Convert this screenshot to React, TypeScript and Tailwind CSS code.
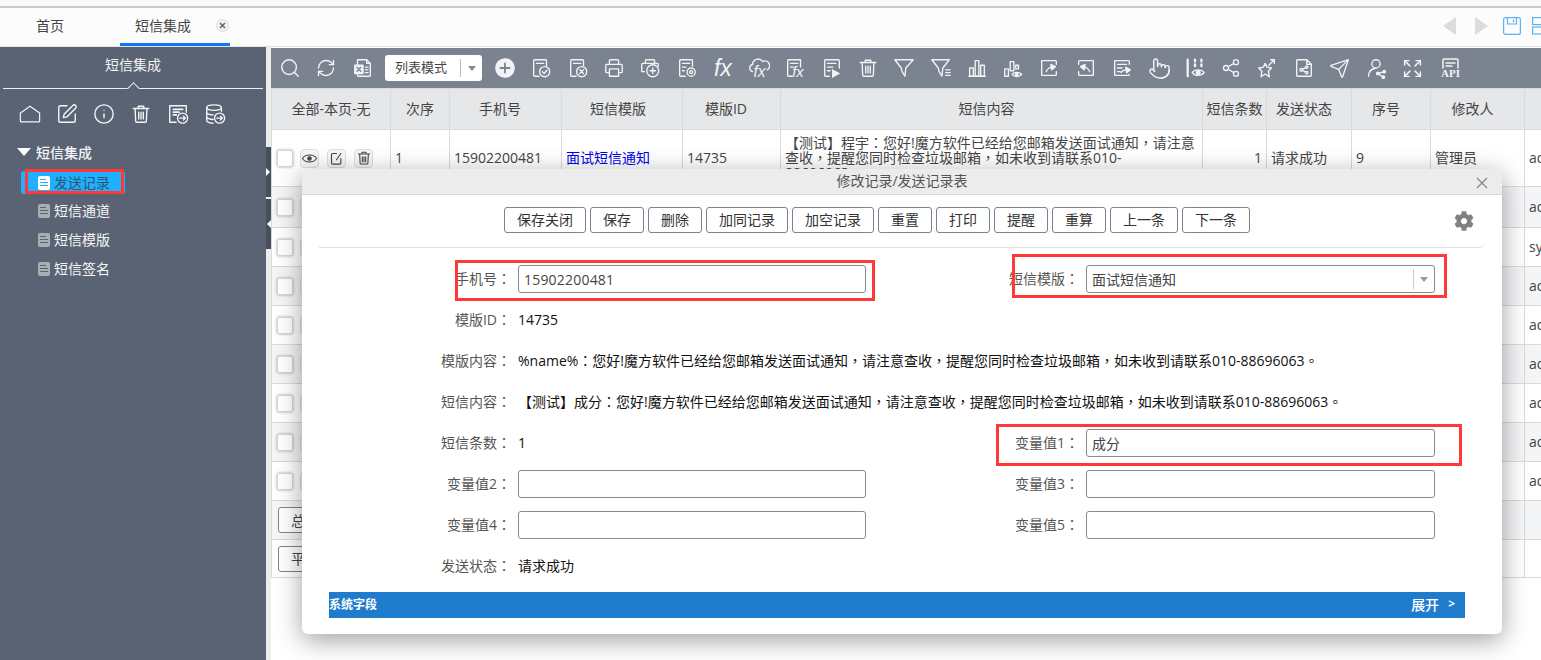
import React from "react";
import { RefreshCw, Info, SquarePen, Share2, Send, Expand, Pointer, Search } from "lucide-react";
import { FaCog } from "react-icons/fa";

type P = { children?: React.ReactNode; size?: number; className?: string; sw?: number };
const Ic = ({ children, size = 22, className = "", sw = 1.5 }: P) => (
  <svg width={size} height={size} viewBox="0 0 24 24" fill="none" stroke="currentColor" strokeWidth={sw} strokeLinecap="round" strokeLinejoin="round" className={className}>
    {children}
  </svg>
);
const GREY = "#7a838f";
const Pn = ({ t }: { t: string }) => (
  <>
    {t.split(/([，：。])/).map((s, i) =>
      i % 2 === 1 ? (
        <span key={i} className="font-['Noto_Sans_CJK_TC',sans-serif]">{s}</span>
      ) : (
        <React.Fragment key={i}>{s}</React.Fragment>
      )
    )}
  </>
);
const DocBase = () => <path d="M10 21H5a1 1 0 0 1-1-1V4a1 1 0 0 1 1-1h12a1 1 0 0 1 1 1v6" />;
const TrashIc = (p: P) => (
  <Ic {...p}>
    <path d="M3.500 6h17M9 6V3.500h6V6M5.500 6l.7 14a1 1 0 0 0 1 1h9.600a1 1 0 0 0 1-1l.7-14M9.500 10v7.500M12 10v7.500M14.500 10v7.500" />
  </Ic>
);
const FxText = ({ x, y, s = 11 }: { x: number; y: number; s?: number }) => (
  <text x={x} y={y} fontSize={s} fontFamily="'Liberation Sans',sans-serif" fontStyle="italic" fill="currentColor" stroke="none">fx</text>
);

const toolbarLeft = [
  <Search key="s" size={22} strokeWidth={1.6} />,
  <RefreshCw key="r" size={20} strokeWidth={1.6} />,
  <Ic key="x">
    <path d="M7 3h9l4 4v13a1 1 0 0 1-1 1H7a1 1 0 0 1-1-1V3z" />
    <path d="M16 3v4h4M14.500 11h3M14.500 14h3M14.500 17h3" />
    <rect x="3" y="9" width="9" height="9" fill="currentColor" />
    <path d="M5.500 11.500l4 4M9.500 11.500l-4 4" stroke={GREY} />
  </Ic>,
];
const toolbarRight = [
  <Ic key="plus"><circle cx="12" cy="12" r="10" fill="currentColor" /><path d="M12 7v10M7 12h10" stroke={GREY} strokeWidth="2" /></Ic>,
  <Ic key="c"><DocBase /><path d="M7 7h8" /><circle cx="16" cy="16" r="5.500" /><path d="M13.500 16l2 2 3-3.500" /></Ic>,
  <Ic key="dx"><DocBase /><path d="M7 7h8" /><circle cx="16" cy="16" r="5.500" /><path d="M14 14l4 4M18 14l-4 4" /></Ic>,
  <Ic key="p"><path d="M7 8V4a1 1 0 0 1 1-1h8a1 1 0 0 1 1 1v4M7 17H4a1 1 0 0 1-1-1v-7a1 1 0 0 1 1-1h16a1 1 0 0 1 1 1v7a1 1 0 0 1-1 1h-3" /><rect x="7" y="13" width="10" height="8" /></Ic>,
  <Ic key="pp"><path d="M7 7V4a1 1 0 0 1 1-1h8a1 1 0 0 1 1 1v3M6 16H3V8a1 1 0 0 1 1-1h16a1 1 0 0 1 1 1v2" /><circle cx="15" cy="15" r="6.500" /><path d="M15 12v6M12 15h6" /></Ic>,
  <Ic key="dg"><DocBase /><path d="M7 7h8M7 11h4M7 15h2" /><circle cx="16.500" cy="16.500" r="4.500" /><circle cx="16.500" cy="16.500" r="1.600" /></Ic>,
  <span key="fx" className="font-['Liberation_Sans',sans-serif] text-[23px] italic leading-none">fx</span>,
  <Ic key="cf"><path d="M5 16a4 4 0 0 1 0-7.800A6 6 0 0 1 16 5a5 5 0 0 1 5 9" /><FxText x={6} y={22} s={17} /></Ic>,
  <Ic key="df"><path d="M9 21H5a1 1 0 0 1-1-1V4a1 1 0 0 1 1-1h13v8" /><path d="M7 7h8M7 11h4" /><FxText x={9} y={22} s={16} /></Ic>,
  <Ic key="dp"><path d="M9 21H5a1 1 0 0 1-1-1V4a1 1 0 0 1 1-1h14a1 1 0 0 1 1 1v8" /><path d="M7 7h9M7 11h6M7 15h3" /><path d="M12 13l9 5-9 5z" fill="currentColor" stroke="none" /></Ic>,
  <TrashIc key="t" />,
  <Ic key="f"><path d="M2 3h20l-8 9-1 9-3-5-1-4z" /></Ic>,
  <Ic key="fl"><path d="M2 3h19l-7 9-1 9-3-5-1-4z" /><path d="M17 14h5M17 17h5M17 20h5" /></Ic>,
  <Ic key="b"><path d="M3 21h18" /><rect x="4" y="12" width="4" height="9" /><rect x="10" y="4" width="4" height="17" /><rect x="16" y="9" width="4" height="12" /></Ic>,
  <Ic key="be"><rect x="3" y="13" width="4" height="8" /><rect x="9" y="5" width="4" height="10" /><rect x="15" y="9" width="3" height="4" /><path d="M11 19c2-3 8-3 10.500 0-2.500 3-8.500 3-10.500 0z" /><circle cx="16" cy="19" r="1.300" fill="currentColor" /></Ic>,
  <Ic key="ex"><path d="M20 8V5a1 1 0 0 0-1-1H4v16h15a1 1 0 0 0 1-1v-3" /><path d="M9 16c1-3 3-4.500 6-5" /><path d="M14 8l5 2.500-4 3.500z" fill="currentColor" /></Ic>,
  <Ic key="im"><path d="M4 8V5a1 1 0 0 1 1-1h15v16H5a1 1 0 0 1-1-1v-3" /><path d="M16 16c-1-3-3-4.500-6-5" /><path d="M11 8l-5 2.500 4 3.500z" fill="currentColor" /></Ic>,
  <Ic key="da"><path d="M20 8V5a1 1 0 0 0-1-1H4v16h15a1 1 0 0 0 1-1" /><path d="M7 8h10M7 12h5M7 16h3" /><path d="M11 17c1-2 3-3 6-3" /><path d="M16 11l5 3-4 3z" fill="currentColor" /></Ic>,
  <span key="h" className="pl-[3px]"><Pointer size={23} strokeWidth={1.5} /></span>,
  <Ic key="ie"><path d="M4 3v18" strokeWidth="2.500" /><path d="M12 3v2M12 8v2M19 3v2M19 8v2" strokeWidth="2.500" /><path d="M9 17c2.500-4 10-4 13 0-3 4-10.500 4-13 0z" /><circle cx="15.500" cy="17" r="2" fill="currentColor" /></Ic>,
  <Share2 key="sh" size={20} strokeWidth={1.6} />,
  <Ic key="st"><path d="M10 7l2 4 5 1-3.500 3.500 1 6-4.500-3-4.500 3 1-6L3 12l5-1z" /><path d="M14 9l6-6M16 3h4v4" /></Ic>,
  <Ic key="ds"><path d="M5 3h10l5 5v12a1 1 0 0 1-1 1H5a1 1 0 0 1-1-1V4a1 1 0 0 1 1-1zM15 3v5h5" /><circle cx="9" cy="14" r="1.500" /><circle cx="15" cy="11" r="1.300" /><circle cx="15" cy="17" r="1.300" /><path d="M10.500 13.300l3.300-1.700M10.500 14.700l3.300 1.700" /></Ic>,
  <Send key="se" size={21} strokeWidth={1.5} />,
  <Ic key="us"><circle cx="12" cy="7.500" r="4.500" /><path d="M4 21c0-5 3-8 7-8.500" /><circle cx="21" cy="16" r="1.300" fill="currentColor" /><circle cx="14" cy="18" r="1.300" fill="currentColor" /><circle cx="20" cy="22" r="1.300" fill="currentColor" /><path d="M14 18l7-2M14 18l6 4" /></Ic>,
  <Expand key="ep" size={21} strokeWidth={1.7} />,
  <span key="api" className="pl-[5px]"><Ic size={24}><path d="M4 12V4a1 1 0 0 1 1-1h13a1 1 0 0 1 1 1v8" /><path d="M7 7h9M7 10h6" /><text x="2" y="21" fontSize="11" fontFamily="'Liberation Serif',serif" fontWeight="700" fill="currentColor" stroke="none">API</text></Ic></span>,
];

const sideIcons = [
  <Ic key="h" size={22} sw={1.3}><path d="M1.500 11L12 3.500 22.500 11v8.500a1 1 0 0 1-1 1h-19a1 1 0 0 1-1-1z" /></Ic>,
  <SquarePen key="e" size={22} strokeWidth={1.5} />,
  <Info key="i" size={22} strokeWidth={1.5} />,
  <TrashIc key="t" />,
  <Ic key="d"><path d="M10 21H3V3h18v7" /><path d="M7 7h10M7 10h6M7 13h3" strokeWidth="2" /><circle cx="17" cy="16.500" r="5.500" /><path d="M14 16.500h6M18 14.500l2 2-2 2" /></Ic>,
  <Ic key="db"><ellipse cx="11" cy="5" rx="8" ry="3" /><path d="M3 5v14c0 1.500 3 3 7 3M3 10c0 1.500 3 3 7 3M3 15c0 1.500 3 3 7 3M19 5v4" /><circle cx="17" cy="16.500" r="5.500" /><path d="M14 16.500h6M18 14.500l2 2-2 2" /></Ic>,
];

const DocTree = ({ active }: { active?: boolean }) => (
  <span className={`flex h-[14px] w-[12px] shrink-0 flex-col justify-center gap-[2px] rounded-[2px] px-[2px] ${active ? "bg-white" : "bg-[#a9adb4]"}`}>
    <span className={`h-[1px] w-[6px] ${active ? "bg-[#1eb1ff]" : "bg-[#5a6374]"}`} />
    <span className={`h-[1px] w-[8px] ${active ? "bg-[#1eb1ff]" : "bg-[#5a6374]"}`} />
    <span className={`h-[1px] w-[8px] ${active ? "bg-[#1eb1ff]" : "bg-[#5a6374]"}`} />
  </span>
);

const colWidths = [119, 59, 112, 121, 98, 422, 64, 85, 79, 94, 76];
const headers: [string, string][] = [
  ["全部-本页-无", "pr-0"],
  ["次序", "pr-0"],
  ["手机号", "pr-[11px]"],
  ["短信模版", "pr-[8px]"],
  ["模版ID", "pr-[11px]"],
  ["短信内容", "pr-[10px]"],
  ["短信条数", "pr-0"],
  ["发送状态", "pr-[10px]"],
  ["序号", "pr-[10px]"],
  ["修改人", "pr-[10px]"],
  ["", "pr-0"],
];
const rowH = ["h-[41px]", "h-[39px]", "h-[39px]", "h-[39px]", "h-[39px]", "h-[39px]", "h-[39px]", "h-[39px]"];
const rowUser = ["admin", "system", "admin", "admin", "admin", "admin", "admin", "admin"];

const RowActions = () => (
  <div className="flex items-center pl-[5px]">
    <span className="h-[17px] w-[16px] shrink-0 rounded-[2px] border border-[#d5d5d5] bg-white shadow-[0_0_3px_rgba(0,0,0,0.35)]" />
    <div className="ml-[7px] flex gap-[8px] text-[#444]">
      <span className="flex h-[19px] w-[19px] items-center justify-center rounded-[4px] border border-[#ddd] bg-[#f6f6f6]">
        <Ic size={17} sw={1.5}><path d="M2 12c4-6.500 16-6.500 20 0-4 6.500-16 6.500-20 0z" /><circle cx="12" cy="12" r="2.500" fill="currentColor" /></Ic>
      </span>
      <span className="flex h-[19px] w-[19px] items-center justify-center rounded-[4px] border border-[#ddd] bg-[#f6f6f6]">
        <Ic size={15} sw={1.8}><path d="M12 4H6a2 2 0 0 0-2 2v13a2 2 0 0 0 2 2h11a2 2 0 0 0 2-2v-7M12 14l7-10" /></Ic>
      </span>
      <span className="flex h-[19px] w-[19px] items-center justify-center rounded-[4px] border border-[#ddd] bg-[#f6f6f6]">
        <TrashIc size={16} sw={1.6} />
      </span>
    </div>
  </div>
);

const cell = "border border-[#d9dadc] px-[5px] align-middle";
const cellT = "border border-[#d9dadc] px-[4px] pb-[2px] align-middle";

const Table = () => (
  <table className="w-[1329px] table-fixed border-collapse text-[14px] leading-[15px] text-[#444]">
    <colgroup>
      {colWidths.map((w, i) => (
        <col key={i} style={{ width: w }} />
      ))}
    </colgroup>
    <thead>
      <tr className="h-[41px] bg-[#e6e7e9]">
        {headers.map(([h, pad], i) => (
          <th key={i} className={`whitespace-nowrap border border-[#d9dadc] pb-[2px] pl-0 text-center align-middle font-normal ${pad}`}>{h}</th>
        ))}
      </tr>
    </thead>
    <tbody>
      <tr className="h-[57px]">
        <td className="border border-[#d9dadc] p-0 align-middle"><RowActions /></td>
        <td className={cellT}>1</td>
        <td className={cellT}>15902200481</td>
        <td className={`${cellT} text-[#0000ee]`}>面试短信通知</td>
        <td className={cellT}>14735</td>
        <td className={`${cellT} pr-0`}><Pn t="【测试】程宇：您好!魔方软件已经给您邮箱发送面试通知，请注意查收，提醒您同时检查垃圾邮箱，如未收到请联系010-" /><br />88696063<Pn t="。" /></td>
        <td className={`${cellT} text-right`}>1</td>
        <td className={cellT}>请求成功</td>
        <td className={cellT}>9</td>
        <td className={cellT}>管理员</td>
        <td className={cellT}>admin</td>
      </tr>
      {rowH.map((h, r) => (
        <tr key={r} className={`${h} ${r % 2 === 1 ? "" : "bg-[#f4f5f7]"}`}>
          <td className="border border-[#d9dadc] p-0 align-middle"><RowActions /></td>
          {colWidths.slice(1, 10).map((_, i) => (
            <td key={i} className={cell} />
          ))}
          <td className={cellT}>{rowUser[r]}</td>
        </tr>
      ))}
      {["总计", "平均"].map((t, r) => (
        <tr key={t} className={r === 0 ? "h-[39px] bg-[#f4f5f7]" : "h-[38px]"}>
          <td className="border border-[#d9dadc] p-0 pl-[6px] align-middle">
            <span className="inline-flex h-[26px] w-[60px] items-center rounded-[3px] border border-[#7a838f] bg-white pl-[12px]">{t}</span>
          </td>
          {colWidths.slice(1).map((_, i) => (
            <td key={i} className={cell} />
          ))}
        </tr>
      ))}
    </tbody>
  </table>
);

const Label = ({ children, w }: { children: string; w: string }) => (
  <div className={`flex h-[28px] shrink-0 items-center justify-end pb-[2px] text-[#555] ${w}`}>
    <span>{children}<Pn t="：" /></span>
  </div>
);
const Field = ({ children, w, select }: { children?: React.ReactNode; w: string; select?: boolean }) => (
  <div className={`ml-[7px] flex h-[28px] items-center rounded-[3px] border border-[#8a8a8a] bg-white pl-[5px] text-[#444] ${w}`}>
    <span className="flex-1">{children}</span>
    {select && (
      <span className="mr-[6px] flex h-[20px] items-center border-l border-[#ccc] pl-[6px]">
        <span className="h-0 w-0 border-x-[4px] border-t-[5px] border-x-transparent border-t-[#999]" />
      </span>
    )}
  </div>
);
const Value = ({ children }: { children: React.ReactNode }) => (
  <div className="ml-[7px] flex h-[28px] items-center whitespace-nowrap pb-[2px] text-[#111]"><span>{children}</span></div>
);
const FormRow = ({ children }: { children: React.ReactNode }) => <div className="flex h-[41px] pt-[6px]">{children}</div>;

const Modal = () => (
  <div className="absolute left-[302px] top-[169px] flex h-[465px] w-[1200px] flex-col rounded-[6px] bg-white text-[14px] shadow-[0_6px_26px_rgba(0,0,0,0.38)]">
    <div className="relative flex h-[26px] shrink-0 items-center justify-center rounded-t-[6px] border-b border-[#d8d8d8] bg-[#ececec] pb-[2px] text-[#555]">
      修改记录/发送记录表
      <svg width="12" height="12" viewBox="0 0 12 12" className="absolute right-[14px] top-[8px]" stroke="#888" strokeWidth="1.300"><path d="M1 1l10 10M11 1L1 11" /></svg>
    </div>
    <div className="relative mx-[17px] flex h-[53px] shrink-0 items-start gap-1 rounded-br-[6px] border-b border-[#dedede] pl-[185px] pt-[12px]">
      {["保存关闭", "保存", "删除", "加同记录", "加空记录", "重置", "打印", "提醒", "重算", "上一条", "下一条"].map((t) => (
        <button key={t} className="h-[26px] rounded-[3px] border border-[#7a838f] bg-white px-[12px] text-[14px] leading-none text-[#333]">{t}</button>
      ))}
      <FaCog size={20} color="#808080" className="absolute left-[1135px] top-[16px]" />
    </div>
    <div className="mt-[11px] flex flex-col">
      <FormRow>
        <Label w="w-[209px]">手机号</Label>
        <Field w="w-[348px]"><span className="tracking-[0.2px]">15902200481</span></Field>
        <Label w="w-[213px]">短信模版</Label>
        <Field w="w-[349px]" select>面试短信通知</Field>
      </FormRow>
      <FormRow><Label w="w-[209px]">模版ID</Label><Value>14735</Value></FormRow>
      <FormRow><Label w="w-[209px]">模版内容</Label><Value><Pn t="%name%：您好!魔方软件已经给您邮箱发送面试通知，请注意查收，提醒您同时检查垃圾邮箱，如未收到请联系010-88696063。" /></Value></FormRow>
      <FormRow><Label w="w-[209px]">短信内容</Label><Value><Pn t="【测试】成分：您好!魔方软件已经给您邮箱发送面试通知，请注意查收，提醒您同时检查垃圾邮箱，如未收到请联系010-88696063。" /></Value></FormRow>
      <FormRow>
        <Label w="w-[209px]">短信条数</Label>
        <div className="w-[355px]"><Value>1</Value></div>
        <Label w="w-[213px]">变量值1</Label>
        <Field w="w-[349px]">成分</Field>
      </FormRow>
      <FormRow>
        <Label w="w-[209px]">变量值2</Label>
        <Field w="w-[348px]" />
        <Label w="w-[213px]">变量值3</Label>
        <Field w="w-[349px]" />
      </FormRow>
      <FormRow>
        <Label w="w-[209px]">变量值4</Label>
        <Field w="w-[348px]" />
        <Label w="w-[213px]">变量值5</Label>
        <Field w="w-[349px]" />
      </FormRow>
      <FormRow><Label w="w-[209px]">发送状态</Label><Value>请求成功</Value></FormRow>
    </div>
    <div className="ml-[27px] mr-[37px] mt-[5px] flex h-[26px] items-center justify-between bg-[#1f7ccc] pr-[10px] text-white">
      <span className="text-[12px] font-bold">系统字段</span>
      <span className="flex items-center gap-[9px] pb-[2px] font-medium">展开<span className="text-[12px] font-bold">&gt;</span></span>
    </div>
  </div>
);

const RedBox = ({ className }: { className: string }) => (
  <div className={`pointer-events-none absolute border-[3px] border-[#ff3838] ${className}`} />
);

export default function App() {
  return (
    <div className="relative flex h-[660px] w-[1541px] flex-col overflow-hidden bg-white font-['Open_Sans','Noto_Sans_CJK_SC',sans-serif] text-[14px]">
      <div className="h-[6px] shrink-0 bg-[#f7f8fa]" />
      <div className="h-[2px] shrink-0 bg-[#c9c9cb]" />
      <div className="flex h-[39px] shrink-0 items-stretch justify-between border-b border-[#e4e4e6] bg-[#fcfcfd] text-[#444]">
        <div className="flex">
          <div className="flex w-[120px] items-center justify-center pb-[3px] pr-[20px]">首页</div>
          <div className="relative flex w-[110px] items-center border-b-[3px] border-[#0a7cf0] pl-[15px]">
            短信集成
            <span className="absolute left-[96px] top-[11px] flex h-[13px] w-[13px] items-center justify-center rounded-full border border-[#ddd] bg-[#f2f2f2]">
              <svg width="7" height="7" viewBox="0 0 7 7" stroke="#666" strokeWidth="1.500"><path d="M1 1l5 5M6 1L1 6" /></svg>
            </span>
          </div>
        </div>
        <div className="flex w-[98px] shrink-0 items-center overflow-hidden pb-[2px]">
          <span className="h-0 w-0 border-y-[9px] border-r-[13px] border-y-transparent border-r-[#dcdcdc]" />
          <span className="ml-[19px] h-0 w-0 border-y-[9px] border-l-[13px] border-y-transparent border-l-[#dcdcdc]" />
          <svg width="18" height="18" viewBox="0 0 18 18" fill="none" stroke="#5ab3f0" strokeWidth="1.200" className="ml-[15px] shrink-0"><rect x=".6" y=".6" width="16.800" height="16.800" rx="2" /><path d="M4.500 1v6h9V1M10.500 2.500v3" /></svg>
          <svg width="18" height="18" viewBox="0 0 18 18" fill="none" stroke="#5ab3f0" strokeWidth="1.200" className="ml-[11px] shrink-0"><rect x=".6" y=".6" width="16" height="7" /><rect x=".6" y="10" width="16" height="7" /></svg>
        </div>
      </div>
      <div className="flex min-h-0 flex-1">
        <aside className="flex w-[266px] shrink-0 flex-col bg-[#5a6374] text-[#f4f5f7]">
          <div className="relative mx-[3px] flex h-[42px] shrink-0 items-start justify-center border-b border-[#f0f0f0] pt-[7px]">
            短信集成
            <span className="absolute bottom-[-5px] left-[126px] h-[9px] w-[9px] rotate-45 border-l border-t border-[#f0f0f0] bg-[#5a6374]" />
          </div>
          <div className="flex gap-[15px] pl-[19px] pt-[14px]">{sideIcons}</div>
          <div className="mt-[16px] flex h-[22px] items-center pl-[17px] font-medium">
            <span className="h-0 w-0 border-x-[7px] border-t-[8px] border-x-transparent border-t-white" />
            <span className="ml-[5px]">短信集成</span>
          </div>
          <div className="ml-[21px] mt-[8px] flex h-[23px] w-[104px] items-center rounded-[3px] bg-[#1eb1ff] pl-[17px] text-[#33536f]">
            <DocTree active /><span className="ml-[4px]">发送记录</span>
          </div>
          <div className="-mt-[1px] flex flex-col">
            {["短信通道", "短信模版", "短信签名"].map((t) => (
              <div key={t} className="mt-[6px] flex h-[23px] items-center pl-[38px]">
                <DocTree /><span className="ml-[4px]">{t}</span>
              </div>
            ))}
          </div>
        </aside>
        <div className="relative w-[5px] shrink-0 bg-[#eceded]">
          <div className="absolute left-0 top-[100px] flex h-[50px] w-[5px] items-center bg-[#474f5c]">
            <span className="h-0 w-0 border-y-[4px] border-l-[4px] border-y-transparent border-l-white" />
          </div>
          <div className="absolute left-0 top-[152px] flex h-[50px] w-[5px] items-center justify-end bg-[#474f5c]">
            <span className="h-0 w-0 border-y-[4px] border-r-[4px] border-y-transparent border-r-white" />
          </div>
        </div>
        <main className="min-w-0 flex-1 overflow-hidden pt-[1px]">
          <div className="flex h-[40px] items-center bg-[#7a838f] pl-[1px] text-[#f2f3f5]">
            {toolbarLeft.map((ic, i) => (
              <span key={i} className="flex w-[36.300px] shrink-0 items-center justify-center">{ic}</span>
            ))}
            <div className="ml-[4px] flex h-[26px] w-[97px] shrink-0 items-center rounded-[3px] bg-white pl-[10px] text-[13px] text-[#444]">
              <span className="w-[65px]">列表模式</span>
              <span className="flex h-[18px] items-center border-l border-[#bbb] pl-[7px]">
                <span className="h-0 w-0 border-x-[4px] border-t-[5px] border-x-transparent border-t-[#888]" />
              </span>
            </div>
            <div className="ml-[5px] flex">
              {toolbarRight.map((ic, i) => (
                <span key={i} className="flex w-[36.300px] shrink-0 items-center justify-center">{ic}</span>
              ))}
            </div>
          </div>
          <Table />
        </main>
      </div>
      <Modal />
      <RedBox className="left-[25px] top-[169px] h-[25px] w-[99px]" />
      <RedBox className="left-[455px] top-[260px] h-[41px] w-[420px]" />
      <RedBox className="left-[1012px] top-[254px] h-[44px] w-[435px]" />
      <RedBox className="left-[996px] top-[424px] h-[42px] w-[466px]" />
    </div>
  );
}
